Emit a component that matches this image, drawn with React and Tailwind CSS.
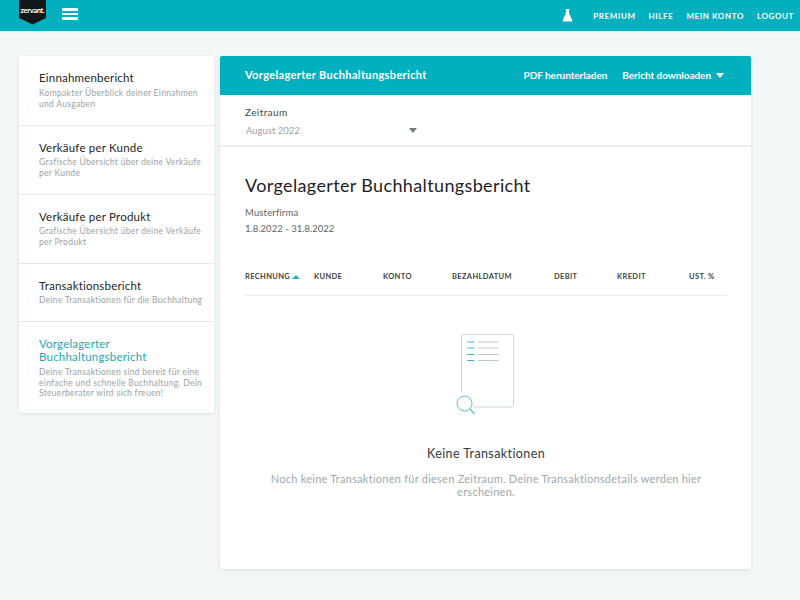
const items = [
  { t: ["Einnahmenbericht"], d: ["Kompakter Überblick deiner Einnahmen", "und Ausgaben"], h: "h-[70px]", mt: "mt-[4px]" },
  { t: ["Verkäufe per Kunde"], d: ["Grafische Übersicht über deine Verkäufe", "per Kunde"], h: "h-[69px]", mt: "mt-[3px]" },
  { t: ["Verkäufe per Produkt"], d: ["Grafische Übersicht über deine Verkäufe", "per Produkt"], h: "h-[69px]", mt: "mt-[3px]" },
  { t: ["Transaktionsbericht"], d: ["Deine Transaktionen für die Buchhaltung"], h: "h-[58px]", mt: "mt-[3px]" },
  { t: ["Vorgelagerter", "Buchhaltungsbericht"], d: ["Deine Transaktionen sind bereit für eine", "einfache und schnelle Buchhaltung. Dein", "Steuerberater wird sich freuen!"], h: "h-[91px]", mt: "mt-[4px]", active: true },
];

const cols = [
  ["RECHNUNG", "w-[69px]"],
  ["KUNDE", "w-[69px]"],
  ["KONTO", "w-[69px]"],
  ["BEZAHLDATUM", "w-[102px]"],
  ["DEBIT", "w-[63px]"],
  ["KREDIT", "w-[72px]"],
  ["UST. %", "w-[38px]"],
];

function SidebarItem({ item, last }) {
  return (
    <div className={`${item.h} pt-[15px] shrink-0 pl-[20px] whitespace-nowrap ${last ? "" : "border-b border-[#e4e8ea]"}`}>
      <div className={`text-[11.5px] leading-[13px] tracking-[0.2px] ${item.active ? "text-[#24a6b5]" : "text-[#22272b]"}`}>
        {item.t.map((l) => <div key={l}>{l}</div>)}
      </div>
      <div className={`${item.mt} text-[8.5px] leading-[10.5px] tracking-[0.3px] text-[#9aa2a6]`}>
        {item.d.map((l) => <div key={l}>{l}</div>)}
      </div>
    </div>
  );
}

export default function App() {
  return (
    <div className="w-[800px] h-[600px] overflow-hidden bg-[#f3f7f8] [font-family:Lato,sans-serif]">
      <header className="h-[31px] bg-[#00b0bf] flex items-start pl-[19px] pr-[6px] shadow-[0_1px_2px_rgba(0,0,0,0.06)]">
        <div className="relative w-[27px] h-[25px] shrink-0">
          <svg width="27" height="25" viewBox="0 0 27 25" className="absolute inset-0">
            <path d="M0 0H27V18L13.5 24.5L0 18Z" fill="#10181c" />
          </svg>
          <span className="absolute left-0 w-[27px] top-[6px] text-center text-[7.5px] leading-[10px] font-bold tracking-[-0.3px] text-white">zervant.</span>
        </div>
        <div className="ml-[16px] mt-[8px] w-[16px] flex flex-col gap-[2px]">
          <div className="h-[2.5px] bg-white rounded-[1px]" />
          <div className="h-[2.5px] bg-white rounded-[1px]" />
          <div className="h-[2.5px] bg-white rounded-[1px]" />
        </div>
        <div className="ml-auto h-[31px] flex items-center text-[8px] font-bold tracking-[0.6px] text-white">
          <svg width="11" height="13" viewBox="0 0 11 13" className="mr-[20px] mb-[1px]">
            <path d="M3.8 0H7.2V1.5H6.7L7.4 5L10.2 11C10.6 12 10.2 12.6 9.2 12.6H1.8C0.8 12.6 0.4 12 0.8 11L3.6 5L4.3 1.5H3.8Z" fill="#fff" />
          </svg>
          <span>PREMIUM</span>
          <span className="ml-[13px]">HILFE</span>
          <span className="ml-[13px]">MEIN KONTO</span>
          <span className="ml-[13px]">LOGOUT</span>
        </div>
      </header>

      <div className="flex items-start pl-[19px] pt-[25px] gap-[6px]">
        <aside className="w-[195px] h-[357px] bg-white rounded-[2px] shadow-[0_1px_4px_rgba(0,0,0,0.1)] flex flex-col">
          {items.map((it, i) => <SidebarItem key={i} item={it} last={i === items.length - 1} />)}
        </aside>

        <main className="w-[531px] h-[513px] bg-white rounded-[2px] shadow-[0_1px_4px_rgba(0,0,0,0.1)]">
          <div className="h-[39px] bg-[#00b0bf] rounded-t-[2px] flex items-center pl-[25px] pr-[27px] text-white font-bold text-[10px]">
            <span className="text-[11px] tracking-[0.35px]">Vorgelagerter Buchhaltungsbericht</span>
            <span className="ml-auto tracking-[-0.05px]">PDF herunterladen</span>
            <span className="ml-[15px] tracking-[-0.05px]">Bericht downloaden</span>
            <svg width="8" height="5" viewBox="0 0 8 5" className="ml-[5px]"><path d="M0 0H8L4 5Z" fill="#fff" /></svg>
          </div>

          <div className="h-[52px] border-b-2 border-[#eceff0] pl-[25px] pt-[10px]">
            <div className="text-[10px] leading-[14px] tracking-[0.4px] text-[#3f4649]">Zeitraum</div>
            <div className="mt-[5px] w-[172px] flex items-center justify-between text-[9.5px] leading-[13px] text-[#9aa2a6]">
              <span className="ml-[1px]">August 2022</span>
              <svg width="8" height="5" viewBox="0 0 8 5"><path d="M0 0H8L4 5Z" fill="#6f7a7f" /></svg>
            </div>
          </div>

          <div className="px-[25px]">
            <h1 className="mt-[27px] text-[18px] leading-[22px] font-normal tracking-[0.36px] text-[#1d2327]">Vorgelagerter Buchhaltungsbericht</h1>
            <div className="mt-[11px] text-[9.5px] leading-[12px] tracking-[0.15px] text-[#5d6669]">Musterfirma</div>
            <div className="mt-[4px] text-[9.5px] leading-[12px] tracking-[0.02px] text-[#5d6669]">1.8.2022 - 31.8.2022</div>

            <div className="mt-[37px] w-[482px] h-[24px] border-b border-[#e8ecee] flex items-start text-[7.5px] leading-[10px] font-bold tracking-[0.35px] text-[#3c4447]">
              {cols.map(([c, w], i) => (
                <div key={c} className={`${w} shrink-0 flex items-center`}>
                  <span>{c}</span>
                  {i === 0 && <svg width="8" height="4" viewBox="0 0 8 4" className="ml-[2px] mb-[1px]"><path d="M4 0L8 4H0Z" fill="#1fb3c2" /></svg>}
                </div>
              ))}
            </div>

            <div className="flex flex-col items-center w-[482px]">
              <svg width="64" height="84" viewBox="0 0 64 84" className="mt-[36px] mr-[2px]">
                <path d="M8.5 60V4a1.5 1.5 0 0 1 1.5-1.5H59a1.5 1.5 0 0 1 1.5 1.5V73.5a1.5 1.5 0 0 1-1.5 1.5H20" fill="none" stroke="#c9d8da" strokeWidth="1" />
                <path d="M14 10H21.5M14 16H21.5M14 22.5H21.5M14 28.5H21.5" stroke="#3dbcc8" strokeWidth="1" />
                <path d="M25 10H45.5M25 16H45.5M25 22.5H45.5M25 28.5H45.5" stroke="#bcc7ca" strokeWidth="1" />
                <circle cx="11.5" cy="71.5" r="7.5" fill="none" stroke="#55c2cd" strokeWidth="1" />
                <path d="M17 77L21.500 82" stroke="#55c2cd" strokeWidth="1.2" />
              </svg>
              <div className="mt-[30px] text-[12.5px] leading-[16px] tracking-[0.4px] text-[#333a3e]">Keine Transaktionen</div>
              <div className="mt-[10px] w-[450px] text-center text-[11px] leading-[13px] tracking-[0.25px] text-[#a0a8ac]">
                Noch keine Transaktionen für diesen Zeitraum. Deine Transaktionsdetails werden hier erscheinen.
              </div>
            </div>
          </div>
        </main>
      </div>
    </div>
  );
}
